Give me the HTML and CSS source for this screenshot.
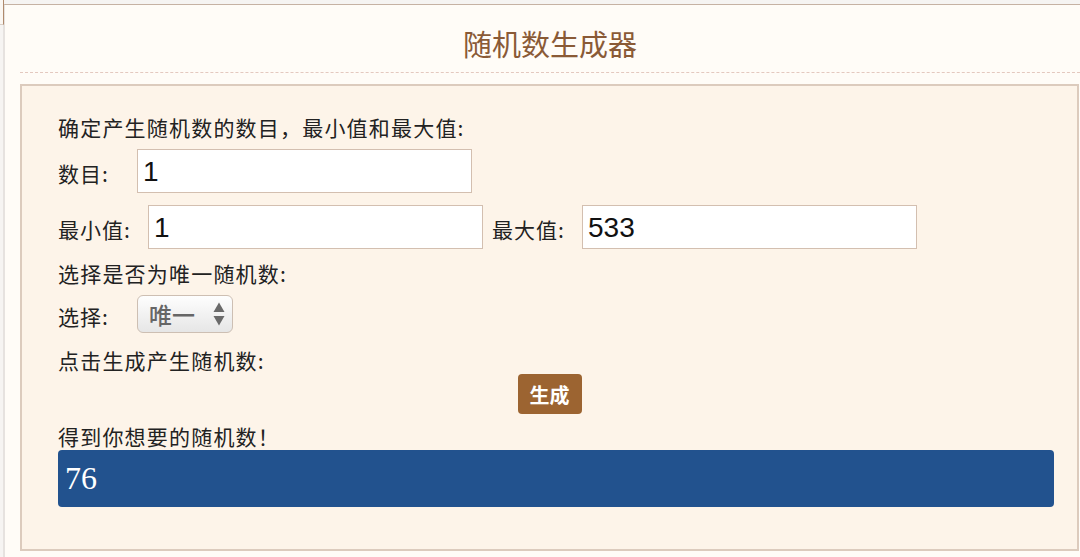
FILE: index.html
```html
<!DOCTYPE html>
<html lang="zh-CN">
<head>
<meta charset="utf-8">
<title>随机数生成器</title>
<link rel="stylesheet" href="styles.css">
</head>
<body>
<div class="corner"></div>
<div class="page">
  <div class="header"><h1 class="title">随机数生成器</h1></div>
  <div class="box">
    <p class="line first">确定产生随机数的数目，最小值和最大值:</p>
    <div class="row r-count">
      <span class="label l-count">数目:</span>
      <div class="field f-count">1</div>
    </div>
    <div class="row r-range">
      <span class="label l-min">最小值:</span>
      <div class="field f-min">1</div>
      <span class="label l-max">最大值:</span>
      <div class="field f-max">533</div>
    </div>
    <p class="line l4">选择是否为唯一随机数:</p>
    <div class="row r-select">
      <span class="label l-choose">选择:</span>
      <div class="select">
        <span class="sel-text">唯一</span>
        <svg class="sel-arrows" width="12" height="26" viewBox="0 0 12 26">
          <path d="M6 1.5 L11.5 11 L0.5 11 Z" fill="#6a6a6a"/>
          <path d="M0.5 15 L11.5 15 L6 24.5 Z" fill="#6a6a6a"/>
        </svg>
      </div>
    </div>
    <p class="line l6">点击生成产生随机数:</p>
    <div class="btn-row"><button class="btn">生成</button></div>
    <p class="line l8">得到你想要的随机数！</p>
    <div class="result">76</div>
  </div>
</div>
</body>
</html>
```

FILE: styles.css
```css
* { box-sizing: border-box; }
html, body { margin: 0; padding: 0; }
body {
  background: #f6f4f2;
  height: 557px;
  overflow: hidden;
  position: relative;
  font-family: "Noto Sans CJK SC", "Liberation Sans", sans-serif;
}
.corner {
  position: absolute;
  left: 0;
  top: 0;
  width: 4px;
  height: 25px;
  border-right: 1px solid #b08a6c;
  border-bottom: 1px solid #d9cfc6;
  background: #fbf7f2;
}
.page {
  margin: 4px 0 0 3px;
  height: 553px;
  border-top: 1px solid #c6b2a3;
  border-left: 2px solid #e6e2df;
  background: #fffcf7;
}
.header {
  margin-left: 15px;
  height: 68px;
  border-bottom: 1px dashed #e4c9bf;
  display: flex;
  align-items: center;
  justify-content: center;
}
.title {
  margin: 0;
  padding-top: 8px;
  font-size: 29px;
  font-weight: 400;
  color: #8a5a36;
}
.box {
  margin: 11px 1px 0 15px;
  height: 467px;
  border: 2px solid #dccbbd;
  background: #fdf4e9;
  padding: 27px 0 0 36px;
  color: #222;
  font-size: 21px;
}
.line {
  margin: 0;
  height: 28px;
  line-height: 28px;
  letter-spacing: 1.2px;
}
.row {
  display: flex;
  align-items: center;
}
.label {
  letter-spacing: 1px;
  line-height: 28px;
}
.r-count { margin-top: 8px; height: 44px; }
.r-count .label { padding-top: 4px; }
.l-count { width: 79px; }
.r-range { margin-top: 12px; height: 44px; }
.r-range .label { padding-top: 3px; }
.l-min { width: 90px; }
.l-max { width: 90px; margin-left: 9px; }
.field {
  width: 335px;
  height: 44px;
  background: #fff;
  border: 1px solid #d3bfb0;
  font-family: "Liberation Sans", Arial, sans-serif;
  font-size: 28px;
  line-height: 44px;
  padding-left: 5px;
  color: #111;
}
.l4 { margin-top: 10px; }
.r-select { margin-top: 8px; height: 38px; }
.r-select .label { padding-top: 4px; }
.l-choose { width: 79px; }
.select {
  width: 96px;
  height: 38px;
  border: 1px solid #cdbfb3;
  border-radius: 6px;
  background: linear-gradient(#fefefe, #e6e6e6);
  display: flex;
  align-items: center;
  padding-left: 11px;
  color: #666;
  font-size: 23px;
  font-weight: 500;
}
.sel-text { width: 64px; }
.sel-arrows { display: block; }
.l6 { margin-top: 13px; }
.btn-row {
  height: 40px;
  display: flex;
  justify-content: center;
  padding-right: 36px;
}
.btn {
  width: 64px;
  height: 40px;
  border: none;
  border-radius: 4px;
  background: #9c6431;
  color: #fff;
  font-family: "Noto Sans CJK SC", sans-serif;
  font-size: 20px;
  font-weight: 700;
  padding: 0;
}
.l8 { margin-top: 8px; }
.result {
  width: 996px;
  height: 57px;
  background: #22528e;
  border-radius: 4px;
  color: #fff;
  font-family: "Liberation Serif", "Times New Roman", serif;
  font-size: 32px;
  line-height: 57px;
  padding-left: 7px;
}
```
